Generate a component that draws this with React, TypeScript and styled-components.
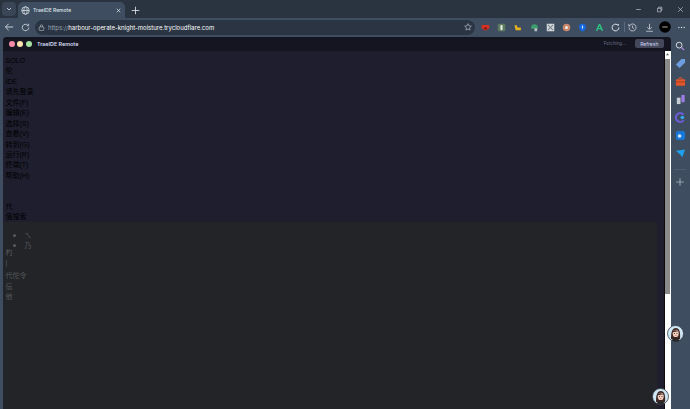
import React from "react";
import styled, { createGlobalStyle } from "styled-components";

const Global = createGlobalStyle`
  html, body { margin: 0; padding: 0; background: #3e4d60; overflow: hidden; }
  #root { width: 690px; height: 409px; }
  * { box-sizing: border-box; }
`;
const Shell = styled.div`
  position: relative; width: 690px; height: 409px; display: flex; flex-direction: column;
  overflow: hidden; background: #3e4d60; font-family: "Inter", "Noto Sans", "Noto Sans CJK SC", sans-serif;
`;
const TabStrip = styled.div`
  height: 18px; flex: none; background: #2a3340; display: flex; align-items: flex-end; padding-left: 2px;
`;
const TabMenu = styled.div`
  width: 14px; height: 14px; margin: 0 2px 2px 0; border-radius: 4px; background: #3a4656;
  display: flex; align-items: center; justify-content: center; color: #d5dae0;
`;
const Tab = styled.div`
  width: 107px; height: 16px; background: #3e4d60; border-radius: 5px 5px 0 0; display: flex; align-items: center;
  padding: 0 3px 0 3px; gap: 3px; color: #dfe4ea; font-size: 5px; font-weight: 500;
`;
const TabTitle = styled.span` flex: 1; `;
const NewTab = styled.div`
  width: 14px; height: 16px; margin-left: 3px; display: flex; align-items: center; justify-content: center; color: #d5dae0;
`;
const WindowControls = styled.div`
  margin-left: auto; display: flex; align-items: center; height: 18px; gap: 14px; padding: 0 6px 0 0; color: #d8dde3;
`;
const Toolbar = styled.div`
  height: 18.5px; flex: none; background: #3e4d60; display: flex; align-items: center; padding-left: 1px; color: #d5dae0;
`;
const NavIcon = styled.div`
  width: 16px; height: 16px; display: flex; align-items: center; justify-content: center; flex: none;
`;
const Omnibox = styled.div`
  width: 440px; height: 15px; margin-left: 2px; border-radius: 8px; background: #2a3442; display: flex; align-items: center;
  padding: 0 3px 0 3px; gap: 3px; font-size: 6px; color: #fff; white-space: nowrap; flex: none;
`;
const Scheme = styled.span` color: #9aa5b1; `;
const Url = styled.span` flex: 1; `;
const Extensions = styled.div`
  display: flex; align-items: center; flex: none; height: 16px; padding-left: 2px;
`;
const ExtSlot = styled.div`
  width: 16.3px; height: 16px; display: flex; align-items: center; justify-content: center; flex: none;
`;
const Divider = styled.div` width: 1px; height: 10px; background: #5c6b7d; flex: none; `;
const MainRow = styled.div` flex: 1; display: flex; min-height: 0; `;
const LeftEdge = styled.div` width: 2.5px; flex: none; `;
const Panel = styled.div`
  flex: none; width: 668px; display: flex; flex-direction: column; background: #1e1e2e; border-radius: 4px 4px 0 0; overflow: hidden;
`;
const TitleBar = styled.div`
  height: 14px; flex: none; background: #151522; display: flex; align-items: center; padding: 0 7px 0 6.5px; color: #cdd6f4;
`;
const Dot = styled.span<{ $c: string }>`
  width: 6px; height: 6px; border-radius: 50%; background: ${p => p.$c}; margin-right: 2.3px; flex: none;
`;
const TitleText = styled.span` font-size: 5.4px; font-weight: 600; margin-left: 3px; flex: 1; color: #d5dbf0; `;
const Fetching = styled.span` font-size: 4.5px; color: #6c6f85; margin-right: 9px; `;
const RefreshBtn = styled.div`
  width: 28.5px; height: 9px; border-radius: 2px; background: #45475a; color: #cdd6f4; font-size: 5px;
  display: flex; align-items: center; justify-content: center;
`;
const Body = styled.div` flex: 1; display: flex; min-height: 0; `;
const Page = styled.div` flex: 1; min-width: 0; display: flex; flex-direction: column; `;
const Upper = styled.div`
  height: 171px; flex: none; padding: 5.5px 0 0 3px; font-size: 7px; color: #000;
  font-family: "Liberation Sans", "Noto Sans CJK SC", sans-serif;
`;
const Line = styled.div<{ $gap?: number }>`
  height: 10.45px; line-height: 10.45px; white-space: nowrap; margin-top: ${p => p.$gap ?? 0}px;
`;
const Spacer = styled.div` height: 20.5px; `;
const Lower = styled.div`
  flex: 1; width: 654px; background: #222428; padding: 8.5px 0 0 3px; font-size: 7px; color: #585a5e;
  font-family: "Liberation Sans", "Noto Sans CJK SC", sans-serif;
`;
const List = styled.ul` margin: 0 0 -2px; padding: 0 0 0 19px; list-style: disc; `;
const Item = styled.li` height: 10px; line-height: 10px; &::marker { font-size: 9px; } `;
const Scrollbar = styled.div`
  width: 7px; flex: none; background: #fff; display: flex; flex-direction: column; align-items: center; border-left: 1px solid #0c0c12;
`;
const ScrollHead = styled.div` height: 8px; flex: none; display: flex; align-items: center; justify-content: center; `;
const ScrollThumb = styled.div` flex: none; width: 5px; height: 235px; background: #8a8a8a; `;
const Side = styled.div`
  width: 19.5px; flex: none; display: flex; flex-direction: column; align-items: center;
`;
const SideSlot = styled.div` width: 18px; height: 18px; display: flex; align-items: center; justify-content: center; flex: none; `;
const SideRule = styled.div` width: 12px; height: 1px; background: #4d5c6f; margin: 6px 0 3.5px; `;
const Avatar = styled.div<{ $x: number; $y: number }>`
  position: absolute; left: ${p => p.$x}px; top: ${p => p.$y}px; width: 17px; height: 17px;
`;

const Face = () => (
  <svg width="17" height="17" viewBox="0 0 17 17">
    <circle cx="8.5" cy="8.5" r="8" fill="#cfe8f6" stroke="#3a3f46" strokeWidth="0.8" />
    <path d="M4 14c0-7 1-11 4.8-11S13.5 7 13 14z" fill="#3b2622" />
    <ellipse cx="8.7" cy="8.4" rx="3" ry="3.6" fill="#f3cfc0" />
    <path d="M5.6 7.5C6 5 8 4.4 11.5 6.5 9.5 6.5 7 6.5 5.6 7.5z" fill="#3b2622" />
    <path d="M4.5 15.5c1-2.6 7-2.6 8.4 0a8 8 0 0 1-8.4 0z" fill="#26262b" />
    <circle cx="7.5" cy="8.4" r=".5" fill="#222" /><circle cx="10" cy="8.4" r=".5" fill="#222" />
    <path d="M8 10.6h1.6" stroke="#c0504d" strokeWidth=".6" />
  </svg>
);

const S = ({ children, w = 10 }: { children: React.ReactNode; w?: number }) => (
  <svg width={w} height={w} viewBox="0 0 12 12" fill="none">{children}</svg>
);

const upper1 = ["SOLO", "伦", "IDE", "请先登录", "文件(F)", "编辑(E)", "选择(S)", "查看(V)", "转到(G)", "运行(R)", "终端(T)", "帮助(H)"];

export default function App() {
  return (
    <Shell>
      <Global />
      <TabStrip>
        <TabMenu><S w={8}><path d="M3 4.5l3 3 3-3" stroke="currentColor" strokeWidth="1.3" /></S></TabMenu>
        <Tab>
          <S w={9}><circle cx="6" cy="6" r="5" stroke="#dfe4ea" /><ellipse cx="6" cy="6" rx="2.2" ry="5" stroke="#dfe4ea" /><path d="M1 6h10" stroke="#dfe4ea" /></S>
          <TabTitle>TraeIDE Remote</TabTitle>
          <S w={7}><path d="M3 3l6 6M9 3l-6 6" stroke="#dfe4ea" strokeWidth="1.3" /></S>
        </Tab>
        <NewTab><S w={9}><path d="M6 1v10M1 6h10" stroke="currentColor" strokeWidth="1.2" /></S></NewTab>
        <WindowControls>
          <S w={7}><path d="M2 6h8" stroke="currentColor" strokeWidth="1" /></S>
          <S w={7}><path d="M2.5 4h6v6h-6zM4.5 4V2h5.5v5.5H8.5" stroke="currentColor" /></S>
          <S w={7}><path d="M2 2l8 8M10 2l-8 8" stroke="currentColor" /></S>
        </WindowControls>
      </TabStrip>
      <Toolbar>
        <NavIcon><S w={10}><path d="M11 6H2M5.5 2.2L1.7 6l3.8 3.8" stroke="currentColor" strokeWidth="1.1" /></S></NavIcon>
        <NavIcon><S w={9}><path d="M10.3 6a4.3 4.3 0 1 1-1.3-3.1M10.2 1v2.6H7.6" stroke="currentColor" strokeWidth="1.1" /></S></NavIcon>
        <Omnibox>
          <S w={7}><rect x="2" y="5" width="8" height="6" rx="1.2" stroke="#c8ced6" /><path d="M4 5V3.4a2 2 0 0 1 4 0V5" stroke="#c8ced6" /></S>
          <Url><Scheme>https://</Scheme>harbour-operate-knight-moisture.trycloudflare.com</Url>
          <S w={8}><path d="M6 1l1.5 3.3 3.5.4-2.6 2.4.7 3.5L6 8.9 2.9 10.6l.7-3.5L1 4.7l3.5-.4z" stroke="#c8ced6" strokeWidth=".9" /></S>
        </Omnibox>
        <Extensions>
          <ExtSlot><S w={9}><path d="M1 2.5h10v5H8.5v2h-5v-2H1z" fill="#d9301f" /><rect x="4" y="6" width="4" height="2.5" fill="#7a1710" /></S></ExtSlot>
          <ExtSlot><S w={9}><rect x="1" y="1" width="10" height="10" rx="2" fill="#5d7a5f" /><rect x="4.6" y="2.5" width="2.8" height="7" rx="1.2" fill="#e6eee4" /></S></ExtSlot>
          <ExtSlot><S w={9}><path d="M2 3h3l1 3h4.5v3.5H3.5z" fill="#e8b21f" /></S></ExtSlot>
          <ExtSlot><S w={9}><path d="M1.5 6a4.5 4.5 0 0 1 9 0v1.5h-9z" fill="#3d9e6d" /><rect x="6" y="7" width="3.5" height="4" fill="#b8c0c8" /></S></ExtSlot>
          <ExtSlot><S w={9}><rect x="1" y="1" width="10" height="10" fill="#d5d8da" /><path d="M2.5 2.5l7 7M9.5 2.5l-7 7" stroke="#7c8a90" strokeWidth="1.5" /></S></ExtSlot>
          <ExtSlot><S w={9}><circle cx="6" cy="6" r="5" fill="#c98668" /><circle cx="6" cy="6" r="2" fill="#eee" /></S></ExtSlot>
          <ExtSlot><S w={9}><path d="M6 .8l4.5 1.7V6c0 2.8-2 4.5-4.5 5.4C3.5 10.5 1.5 8.8 1.5 6V2.5z" fill="#1668dc" /><rect x="5.3" y="3.5" width="1.4" height="4" fill="#dde9fb" /></S></ExtSlot>
          <ExtSlot><S w={9}><path d="M6 1.5L2 10.5M6 1.5l4 9M3.5 7.5h5" stroke="#2dc27d" strokeWidth="1.8" /></S></ExtSlot>
          <ExtSlot><S w={9}><path d="M10.5 6a4.5 4.5 0 1 1-2-3.7" stroke="#dfe4ea" strokeWidth="1.3" /><rect x="8.5" y="1.5" width="2" height="2" fill="#dfe4ea" /></S></ExtSlot>
          <Divider />
          <ExtSlot><S w={9}><path d="M2 3.5A4.7 4.7 0 1 1 1.3 6M6 3.5V6.3l2 1" stroke="#d5dae0" strokeWidth="1" /><path d="M1 1.5V4h2.5" stroke="#d5dae0" /></S></ExtSlot>
          <ExtSlot><S w={9}><path d="M6 1v7M3 5.5L6 8.5l3-3M1.5 11h9" stroke="#d5dae0" strokeWidth="1" /></S></ExtSlot>
          <ExtSlot><S w={12}><circle cx="6" cy="6" r="5.8" fill="#000" /><rect x="3.3" y="5.5" width="5.4" height="1" fill="#aaa" /></S></ExtSlot>
          <ExtSlot><S w={9}><circle cx="2.5" cy="6" r=".9" fill="#d5dae0" /><circle cx="6" cy="6" r=".9" fill="#d5dae0" /><circle cx="9.5" cy="6" r=".9" fill="#d5dae0" /></S></ExtSlot>
        </Extensions>
      </Toolbar>
      <MainRow>
        <LeftEdge />
        <Panel>
          <TitleBar>
            <Dot $c="#f38ba8" /><Dot $c="#f9e2af" /><Dot $c="#a6e3a1" />
            <TitleText>TraeIDE Remote</TitleText>
            <Fetching>Fetching...</Fetching>
            <RefreshBtn>Refresh</RefreshBtn>
          </TitleBar>
          <Body>
            <Page>
              <Upper>
                {upper1.map(t => <Line key={t}>{t}</Line>)}
                <Spacer />
                <Line>代</Line>
                <Line>值搜索</Line>
              </Upper>
              <Lower>
                <List><Item>ㄟ</Item><Item>乃</Item></List>
                <Line>杓</Line>
                <Line>|</Line>
                <Line $gap={2.5}>代佗令</Line>
                <Line>伝</Line>
                <Line>他</Line>
              </Lower>
            </Page>
            <Scrollbar>
              <ScrollHead><S w={5}><path d="M6 3l3.5 5h-7z" fill="#555" /></S></ScrollHead>
              <ScrollThumb />
            </Scrollbar>
          </Body>
        </Panel>
        <Side>
          <SideSlot><S w={10}><circle cx="5" cy="5" r="3.5" stroke="#d5dae0" strokeWidth="1.2" /><path d="M7.8 7.8L11 11" stroke="#b78be8" strokeWidth="1.4" /></S></SideSlot>
          <SideSlot><S w={11}><path d="M1 7l6-6h4v4l-6 6z" fill="#6d9fe0" /></S></SideSlot>
          <SideSlot><S w={11}><rect x="1" y="3.5" width="10" height="7" rx="1" fill="#e0562a" /><path d="M4.5 3.5V2h3v1.5" stroke="#e0562a" /><path d="M1 6.5h10" stroke="#8c2f14" strokeWidth=".7" /></S></SideSlot>
          <SideSlot><S w={11}><rect x="2" y="4" width="4" height="7" fill="#c5ccd3" /><rect x="7" y="1" width="3.5" height="8" fill="#9e7ee6" /></S></SideSlot>
          <SideSlot><S w={11}><path d="M9.5 3A4.8 4.8 0 1 0 9.5 9" stroke="#6f5fe0" strokeWidth="2" /><circle cx="8" cy="6" r="2" fill="#31a9ee" /></S></SideSlot>
          <SideSlot><S w={11}><rect x="1" y="1" width="10" height="10" rx="2.5" fill="#1677d8" /><circle cx="5" cy="6.5" r="2" fill="#cfe5fb" /></S></SideSlot>
          <SideSlot><S w={11}><path d="M1 3l10-1.5L8 10 5.5 7z" fill="#1f9eea" /></S></SideSlot>
          <SideRule />
          <SideSlot><S w={10}><path d="M6 1.5v9M1.5 6h9" stroke="#a9b3be" strokeWidth="1" /></S></SideSlot>
        </Side>
      </MainRow>
      <Avatar $x={667} $y={325}><Face /></Avatar>
      <Avatar $x={652} $y={388}><Face /></Avatar>
    </Shell>
  );
}
